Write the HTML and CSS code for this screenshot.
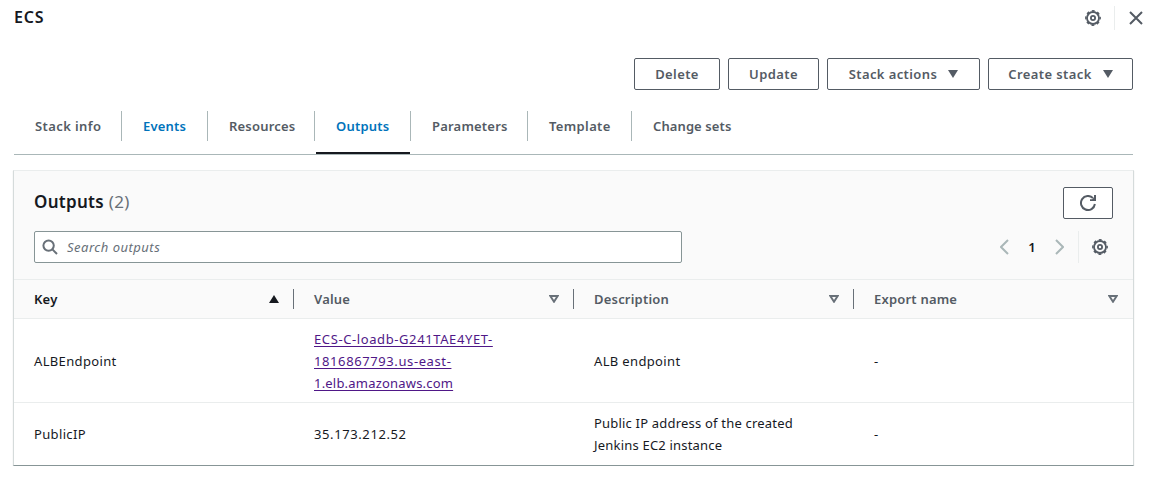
FILE: index.html
```
<!DOCTYPE html>
<html lang="en">
<head>
    <meta charset="UTF-8">
    <meta name="viewport" content="width=device-width, initial-scale=1.0">
    <title>ECS</title>
    <link rel="stylesheet" href="styles.css">
</head>
<body>
    <header class="topbar">
        <h1 class="title">ECS</h1>
        <div class="topbarIcons">
            <svg class="gear" viewBox="0 0 16 16"><circle class="ring" cx="8" cy="8" r="6"/><circle class="teeth" cx="8" cy="8" r="7.2"/><circle class="hub" cx="8" cy="8" r="2.1"/></svg>
            <span class="line"></span>
            <svg class="close" viewBox="0 0 16 16"><path d="M2 2l12 12M14 2L2 14"/></svg>
        </div>
    </header>

    <div class="actions">
        <button class="btn delete">Delete</button>
        <button class="btn update">Update</button>
        <button class="btn stack">Stack actions <svg class="caret" viewBox="0 0 10 8"><path d="M0 0h10L5 8z"/></svg></button>
        <button class="btn create">Create stack <svg class="caret" viewBox="0 0 10 8"><path d="M0 0h10L5 8z"/></svg></button>
    </div>

    <nav class="tabs">
        <a class="tab info"><span>Stack info</span></a>
        <a class="tab events"><span>Events</span></a>
        <a class="tab resources"><span>Resources</span></a>
        <a class="tab outputs active"><span>Outputs</span></a>
        <a class="tab parameters"><span>Parameters</span></a>
        <a class="tab template"><span>Template</span></a>
        <a class="tab changes"><span>Change sets</span></a>
    </nav>

    <div class="card">
        <div class="cardHeader">
            <div class="headingRow">
                <h2 class="heading"><b>Outputs</b> <span>(2)</span></h2>
                <button class="btn refresh"><svg viewBox="0 0 16 16"><path d="M14.9 9A7 7 0 1 1 13 3.1"/><path class="tip" d="M16 0v6h-6V4.2h2.2L14 2.4V0z"/></svg></button>
            </div>
            <div class="filterRow">
                <div class="search">
                    <svg viewBox="0 0 16 16"><circle cx="6.6" cy="6.6" r="5.2"/><path d="M10.4 10.4L15 15"/></svg>
                    <span>Search outputs</span>
                </div>
                <div class="pages">
                    <svg class="arrow" viewBox="0 0 9 16"><path d="M8 1L1 8l7 7"/></svg>
                    <span class="page">1</span>
                    <svg class="arrow" viewBox="0 0 9 16"><path d="M1 1l7 7-7 7"/></svg>
                    <span class="line"></span>
                    <svg class="gear" viewBox="0 0 16 16"><circle class="ring" cx="8" cy="8" r="6"/><circle class="teeth" cx="8" cy="8" r="7.2"/><circle class="hub" cx="8" cy="8" r="2.1"/></svg>
                </div>
            </div>
        </div>
        <div class="row head">
            <div class="cell key"><span>Key</span><svg class="sort up" viewBox="0 0 10 8"><path d="M5 0l5 8H0z"/></svg></div>
            <div class="cell"><span>Value</span><svg class="sort" viewBox="0 0 10 8"><path d="M1.3 1h7.4L5 6.7z"/></svg></div>
            <div class="cell"><span>Description</span><svg class="sort" viewBox="0 0 10 8"><path d="M1.3 1h7.4L5 6.7z"/></svg></div>
            <div class="cell"><span>Export name</span><svg class="sort" viewBox="0 0 10 8"><path d="M1.3 1h7.4L5 6.7z"/></svg></div>
        </div>
        <div class="row first">
            <div class="cell name">ALBEndpoint</div>
            <div class="cell"><a class="link"><span class="wide">ECS-C-loadb-G241TAE4YET-</span><br><span class="wide">1816867793.us-east-</span><br>1.elb.amazonaws.com</a></div>
            <div class="cell name">ALB endpoint</div>
            <div class="cell">-</div>
        </div>
        <div class="row second">
            <div class="cell name">PublicIP</div>
            <div class="cell wide">35.173.212.52</div>
            <div class="cell">Public IP address of the created<br>Jenkins EC2 instance</div>
            <div class="cell">-</div>
        </div>
    </div>
</body>
</html>
```
FILE: styles.css
```
* {
    box-sizing: border-box;
}
body {
    margin: 0;
    padding: 0 16px 0 14px;
    background-color: #fff;
    font-family: "Noto Sans", sans-serif;
    font-size: 13px;
    line-height: 22px;
    letter-spacing: 0.2px;
    color: #16191f;
}
svg {
    display: block;
    flex: none;
    fill: none;
    stroke: #545b64;
    stroke-width: 2;
}
.topbar {
    display: flex;
    justify-content: space-between;
    height: 58px;
    margin-right: -11px;
    padding-top: 6px;
}
.title {
    margin: 0;
    font-size: 16px;
    font-weight: 600;
    line-height: 22px;
    letter-spacing: 0.8px;
}
.topbarIcons {
    display: flex;
    height: 24px;
    align-items: center;
}
.gear {
    width: 16px;
    height: 16px;
}
.ring {
    stroke-width: 1.8;
}
.teeth {
    stroke-width: 1.4;
    stroke-dasharray: 2.9 2.755;
    stroke-dashoffset: 1.45;
}
.hub {
    stroke-width: 1.8;
}
.line {
    width: 1px;
    height: 24px;
    margin: 0 13px;
    background: #eaeded;
}
.close {
    width: 16px;
    height: 16px;
}
.actions {
    display: flex;
    justify-content: flex-end;
    gap: 8px;
}
.btn {
    display: flex;
    align-items: center;
    justify-content: center;
    height: 32px;
    padding: 0;
    background: #fff;
    border: 1px solid #545b64;
    border-radius: 2px;
    color: #545b64;
    font-family: inherit;
    font-size: 13px;
    font-weight: 600;
    letter-spacing: 0.4px;
}
.delete {
    width: 86px;
}
.update {
    width: 91px;
}
.stack {
    width: 153px;
}
.create {
    width: 145px;
}
.caret {
    width: 10px;
    height: 8px;
    margin-left: 11px;
    fill: #545b64;
    stroke: none;
}
.tabs {
    display: flex;
    height: 65px;
    padding-top: 21px;
    border-bottom: 1px solid #aab7b8;
}
.tab {
    height: 43px;
    color: #545b64;
    font-weight: 600;
}
.tab span {
    display: block;
    height: 30px;
    padding-left: 21px;
    line-height: 30px;
    border-right: 1px solid #aab7b8;
}
.info {
    width: 108px;
    letter-spacing: 0.4px;
}
.events {
    width: 86px;
}
.resources {
    width: 107px;
}
.outputs {
    width: 96px;
}
.parameters {
    width: 117px;
}
.template {
    width: 104px;
    letter-spacing: 0.35px;
}
.changes {
    letter-spacing: 0.1px;
}
.changes span {
    border: none;
}
.events, .active {
    color: #0073bb;
}
.active {
    background: linear-gradient(#16191f, #16191f) 1px 100% / 94px 2px no-repeat;
}
.card {
    height: 296px;
    margin: 15px -1px 0 -1px;
    border: 1px solid #d5dbdb;
    border-top-color: #eaeded;
    border-bottom-color: #879596;
    box-shadow: 0 1px 1px rgba(0, 28, 36, 0.15);
}
.cardHeader {
    height: 109px;
    padding: 15px 20px 0;
    background: #fafafa;
    border-bottom: 1px solid #eaeded;
}
.headingRow {
    display: flex;
    justify-content: space-between;
    height: 45px;
}
.heading {
    margin: 5px 0 0;
    font-size: 17px;
    font-weight: 400;
    line-height: 22px;
    letter-spacing: 0.3px;
}
.heading b {
    font-weight: 600;
}
.heading span {
    color: #687078;
}
.refresh {
    width: 50px;
    margin-top: 1px;
}
.refresh svg {
    width: 16px;
    height: 16px;
}
.tip {
    fill: #545b64;
    stroke: none;
}
.filterRow {
    display: flex;
    justify-content: space-between;
}
.search {
    display: flex;
    align-items: center;
    width: 648px;
    height: 32px;
    padding-left: 7px;
    background: #fff;
    border: 1px solid #879596;
    border-radius: 2px;
    color: #687078;
    font-style: italic;
    letter-spacing: 0.5px;
}
.search svg {
    width: 16px;
    height: 16px;
    margin-right: 9px;
    stroke: #687078;
}
.pages {
    display: flex;
    align-items: center;
    margin-right: 5px;
}
.pages .line {
    height: 32px;
    margin-left: 14px;
}
.arrow {
    width: 9px;
    height: 16px;
    stroke: #aab7b8;
}
.page {
    width: 46px;
    text-align: center;
    font-weight: 600;
}
.row {
    display: grid;
    grid-template-columns: 280px 280px 280px 1fr;
}
.cell {
    display: flex;
    align-items: center;
    padding-left: 20px;
}
.head {
    height: 39px;
    padding: 9px 0;
    background: #fafafa;
    border-bottom: 1px solid #eaeded;
    color: #545b64;
    font-weight: 600;
}
.head .cell {
    height: 20px;
    justify-content: space-between;
    padding-right: 14px;
    border-right: 1px solid #687078;
}
.head .cell:last-child {
    padding-right: 15px;
    border: none;
}
.head .key {
    color: #16191f;
}
.sort {
    width: 10px;
    height: 8px;
    stroke: #687078;
}
.up {
    fill: #16191f;
    stroke: none;
}
.first {
    height: 84px;
    border-bottom: 1px solid #eaeded;
}
.second {
    height: 62px;
}
.name {
    letter-spacing: 0.35px;
}
.wide {
    letter-spacing: 0.6px;
}
.link {
    color: #4f1787;
    text-decoration: underline;
    text-underline-offset: 2px;
}
```
